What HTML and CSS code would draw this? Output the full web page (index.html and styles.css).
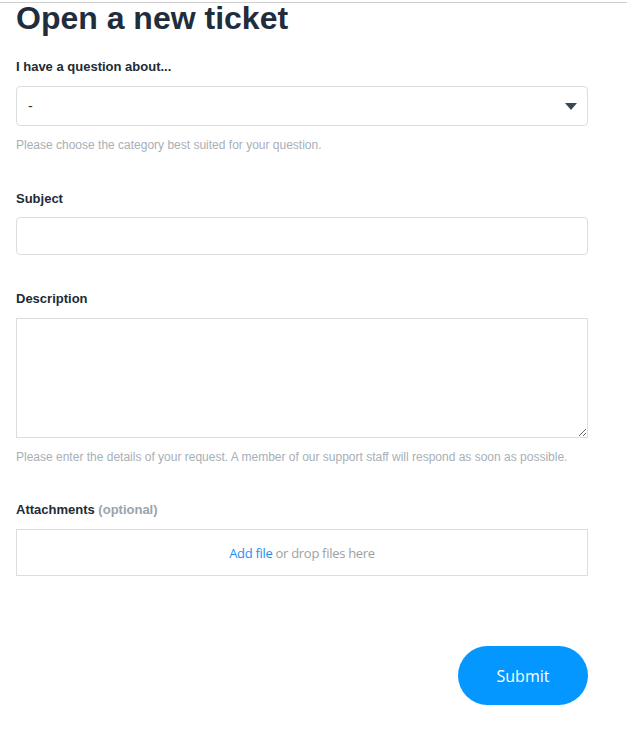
FILE: index.html
```html
<!DOCTYPE html>
<html lang="en">
<head>
  <meta charset="UTF-8">
  <meta name="viewport" content="width=device-width, initial-scale=1">
  <title>Open a new ticket</title>
  <link rel="stylesheet" href="styles.css">
</head>
<body>
  <div class="top-rule"></div>
  <div class="page">
    <h1>Open a new ticket</h1>

    <form class="ticket-form">
      <div class="field field-category">
        <label>I have a question about...</label>
        <div class="select-box">
          <span>-</span>
          <svg class="caret" width="12" height="7" viewBox="0 0 12 7"><path d="M0 0h12L6 7z" fill="#3c4755"/></svg>
        </div>
        <p class="help">Please choose the category best suited for your question.</p>
      </div>

      <div class="field field-subject">
        <label>Subject</label>
        <input type="text" class="text-input">
      </div>

      <div class="field field-description">
        <label>Description</label>
        <textarea class="text-area"></textarea>
        <p class="help">Please enter the details of your request. A member of our support staff will respond as soon as possible.</p>
      </div>

      <div class="field">
        <label>Attachments <span class="optional">(optional)</span></label>
        <div class="dropzone"><a href="#">Add file</a> or drop files here</div>
      </div>

      <div class="actions">
        <button type="button" class="submit">Submit</button>
      </div>
    </form>
  </div>
</body>
</html>
```

FILE: styles.css
```css
*{
  margin: 0;
  padding: 0;
  box-sizing: border-box;
}
body{
  background: #fff;
  color: #222b36;
  font-family: "Liberation Sans", Arial, sans-serif;
}
.top-rule{
  height: 3px;
  border-bottom: 1px solid #cfcfcf;
}
.page{
  width: 572px;
  margin-left: 16px;
}
h1{
  font-size: 32px;
  line-height: 30px;
  font-weight: bold;
  color: #1f2d3d;
}
.ticket-form{
  padding-top: 25px;
}
.field{
  margin-bottom: 34px;
}
.field-category{
  margin-bottom: 36px;
}
.field-subject,
.field-description{
  margin-bottom: 35px;
}
label{
  display: block;
  font-size: 13px;
  font-weight: bold;
  line-height: 18px;
  margin-bottom: 10px;
}
.field-subject label{
  margin-bottom: 9px;
}
.optional{
  color: #9aa3ad;
}
.select-box{
  display: flex;
  justify-content: space-between;
  align-items: center;
  height: 40px;
  padding: 0 10px 0 11px;
  border: 1px solid #ddd;
  border-radius: 4px;
  font-size: 14px;
  color: #333;
}
.help{
  font-size: 12px;
  line-height: 18px;
  margin-top: 10px;
  color: #a7afb8;
}
.text-input{
  display: block;
  width: 100%;
  height: 38px;
  border: 1px solid #ddd;
  border-radius: 4px;
}
.text-area{
  display: block;
  width: 100%;
  height: 120px;
  border: 1px solid #ddd;
  border-radius: 0;
}
.dropzone{
  height: 47px;
  border: 1px solid #ddd;
  display: flex;
  justify-content: center;
  align-items: center;
  font-family: "Open Sans", sans-serif;
  font-size: 13px;
  letter-spacing: -0.3px;
  color: #a0a0a0;
  white-space: pre;
}
.dropzone a{
  color: #1f8ef1;
  text-decoration: none;
}
.actions{
  display: flex;
  justify-content: flex-end;
  padding-top: 36px;
}
.submit{
  width: 130px;
  height: 59px;
  border: none;
  border-radius: 30px;
  background: #0497ff;
  color: #fff;
  font-family: "Open Sans", sans-serif;
  font-size: 16px;
}
```
